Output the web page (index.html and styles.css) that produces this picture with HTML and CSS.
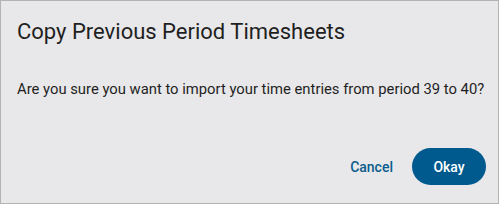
FILE: index.html
```html
<!DOCTYPE html>
<html>
<head>
<meta charset="utf-8">
<link rel="stylesheet" href="styles.css">
</head>
<body>
<div class="dialog">
  <h2 class="title">Copy Previous Period Timesheets</h2>
  <p class="message">Are you sure you want to import your time entries from period 39 to 40?</p>
  <div class="actions">
    <button class="btn btn-text">Cancel</button>
    <button class="btn btn-primary">Okay</button>
  </div>
</div>
</body>
</html>
```
FILE: styles.css
```css
html, body {
  margin: 0;
  padding: 0;
}
body {
  width: 499px;
  height: 204px;
  font-family: Roboto, "Liberation Sans", sans-serif;
  background: #e8e8ea;
}
.dialog {
  box-sizing: border-box;
  width: 499px;
  height: 204px;
  border: 1px solid #b3b3b3;
  background: #e8e8ea;
  padding: 0 12px 0 16px;
  display: flex;
  flex-direction: column;
}
.title {
  margin: 17px 0 0;
  font-size: 22px;
  font-weight: 400;
  line-height: 28px;
  color: #1f1f1f;
}
.message {
  margin: 33px 0 0;
  font-size: 14.8px;
  line-height: 20px;
  white-space: nowrap;
  color: #1f1f1f;
}
.actions {
  margin-top: auto;
  margin-bottom: 18px;
  display: flex;
  justify-content: flex-end;
  align-items: center;
  gap: 19px;
}
.btn {
  font-family: inherit;
  font-size: 14px;
  font-weight: 500;
  border: none;
  cursor: pointer;
}
.btn-text {
  background: transparent;
  color: #0b5d8c;
  padding: 0;
}
.btn-primary {
  background: #005a8e;
  color: #ffffff;
  width: 74px;
  height: 37px;
  border-radius: 19px;
}
```
